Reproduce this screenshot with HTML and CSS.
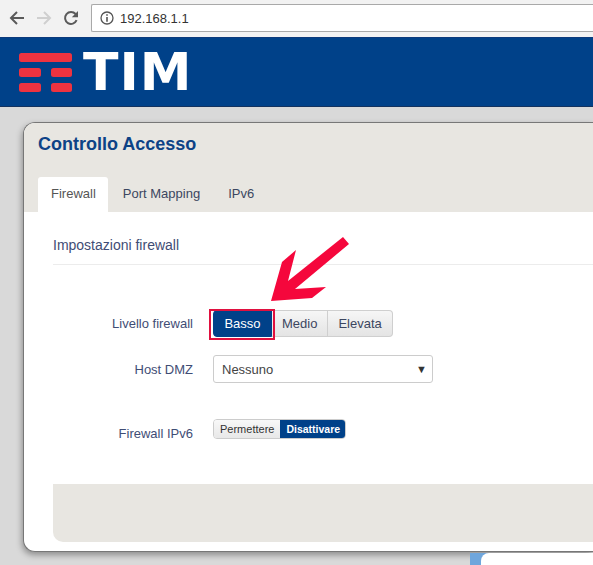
FILE: index.html
```html
<!DOCTYPE html>
<html lang="en">
<head>
    <meta charset="UTF-8">
    <meta name="viewport" content="width=device-width, initial-scale=1.0">
    <title>Controllo Accesso</title>
    <link rel="stylesheet" href="styles.css">
</head>
<body>
    <div class="browser-bar">
        <svg class="nav-icon" viewBox="0 0 16 16"><path d="M15 8H2.5M8 2L2 8l6 6" fill="none" stroke="#5a5a5a" stroke-width="2"/></svg>
        <svg class="nav-icon" viewBox="0 0 16 16"><path d="M1 8h12.5M8 2l6 6-6 6" fill="none" stroke="#cfcfcf" stroke-width="2"/></svg>
        <svg class="nav-icon" viewBox="0 0 16 16"><path d="M13.6 10.2A6 6 0 1 1 12.6 4" fill="none" stroke="#5a5a5a" stroke-width="2"/><path d="M15 1v6.2H8.8z" fill="#5a5a5a"/></svg>
        <div class="url-box">
            <svg class="info-icon" viewBox="0 0 14 14"><circle cx="7" cy="7" r="6" fill="none" stroke="#555" stroke-width="1.3"/><path d="M6.2 3.2h1.6v1.6H6.2zM6.2 6h1.6v4.8H6.2z" fill="#555"/></svg>
            <span>192.168.1.1</span>
        </div>
    </div>

    <header class="site-header">
        <svg class="logo-mark" viewBox="0 0 53 39">
            <rect x="0" y="0" width="53" height="9" rx="2.5"/>
            <rect x="0" y="15" width="22" height="9" rx="2.5"/>
            <rect x="32" y="15" width="21" height="9" rx="2.5"/>
            <rect x="0" y="30" width="22" height="9" rx="2.5"/>
            <rect x="32" y="30" width="21" height="9" rx="2.5"/>
        </svg>
        <span class="logo-text">TIM</span>
    </header>

    <main class="card">
        <div class="card-head">
            <h1>Controllo Accesso</h1>
            <ul class="tabs">
                <li class="tab active">Firewall</li>
                <li class="tab">Port Mapping</li>
                <li class="tab">IPv6</li>
            </ul>
        </div>
        <div class="card-body">
            <h2>Impostazioni firewall</h2>
            <div class="form-rows">
                <div class="row row-level">
                    <label>Livello firewall</label>
                    <div class="btn-group">
                        <button class="btn selected">Basso</button>
                        <button class="btn">Medio</button>
                        <button class="btn">Elevata</button>
                    </div>
                </div>
                <div class="row row-dmz">
                    <label>Host DMZ</label>
                    <div class="select-box">
                        <span>Nessuno</span>
                        <span class="caret">▼</span>
                    </div>
                </div>
                <div class="row row-ipv6">
                    <label>Firewall IPv6</label>
                    <div class="toggle">
                        <span class="toggle-item">Permettere</span>
                        <span class="toggle-item on">Disattivare</span>
                    </div>
                </div>
            </div>
            <div class="card-foot"></div>
        </div>
    </main>

    <div class="next-panel"><div class="next-panel-inner"></div></div>

    <!-- red annotation drawn over the screenshot -->
    <div class="mark-box"></div>
    <svg class="mark-arrow" viewBox="0 0 593 565"><polygon points="271,301 282,262 296,250 288,281 343,237 349,244 295,289 326,287 312,298" fill="#f5073c"/></svg>
</body>
</html>
```

FILE: styles.css
```css
html, body { height: 100%; }
body {
    margin: 0;
    font-family: 'Liberation Sans', Arial, sans-serif;
    background-color: #d9d9d9;
    color: #3d4a6b;
    overflow: hidden;
    position: relative;
}

/* browser chrome */
.browser-bar {
    height: 37px;
    box-sizing: border-box;
    padding: 4px 0 5px 9px;
    display: flex;
    align-items: center;
    gap: 11px;
    background-color: #f2f2f2;
}
.nav-icon { width: 16px; height: 16px; flex: none; }
.url-box {
    flex: 1;
    height: 28px;
    margin-left: 1px;
    box-sizing: border-box;
    display: flex;
    align-items: center;
    gap: 6px;
    padding-left: 8px;
    background-color: #fff;
    border: 1px solid #a9a9a9;
    border-right: none;
    border-radius: 2px 0 0 2px;
    font-size: 13px;
    color: #333;
}
.info-icon { width: 14px; height: 14px; }

/* site header */
.site-header {
    height: 70px;
    box-sizing: border-box;
    padding: 15px 0 0 19px;
    display: flex;
    align-items: flex-start;
    gap: 11px;
    background-color: #004189;
    border-top: 1px solid #0c3a7c;
    border-bottom: 1px solid #12325f;
}
.logo-mark { width: 53px; height: 39px; fill: #ee3340; flex: none; }
.logo-text {
    font-family: 'DejaVu Sans', sans-serif;
    font-weight: bold;
    font-size: 52px;
    line-height: 39px;
    letter-spacing: 1px;
    color: #fff;
}

/* main card, its right edge is cut off by the window */
.card {
    height: 430px;
    margin: 15px 0 0 23px;
    box-sizing: border-box;
    display: flex;
    flex-direction: column;
    background-color: #fff;
    border: 1px solid #777;
    border-right: none;
    border-radius: 12px 0 0 12px;
    box-shadow: -1px 3px 6px rgba(0,0,0,0.35);
    overflow: hidden;
}
.card-head {
    height: 89px;
    flex: none;
    box-sizing: border-box;
    padding: 10px 0 0 14px;
    background-color: #e8e6e1;
}
h1 {
    margin: 0;
    font-size: 18px;
    line-height: 22px;
    font-weight: bold;
    color: #0d4286;
}
.tabs {
    display: flex;
    list-style: none;
    margin: 22px 0 0;
    padding: 0;
}
.tab {
    height: 35px;
    box-sizing: border-box;
    padding: 9px 14px 0;
    font-size: 13px;
    line-height: 16px;
    color: #3c4660;
    border-radius: 3px 3px 0 0;
}
.tab.active {
    background-color: #fff;
    color: #555;
    padding: 9px 12px 0 13px;
    margin-right: 1px;
}

.card-body {
    flex: 1;
    display: flex;
    flex-direction: column;
    padding: 0 0 9px 29px;
}
h2 {
    margin: 0;
    height: 53px;
    box-sizing: border-box;
    padding-top: 25px;
    font-size: 14px;
    line-height: 16px;
    font-weight: normal;
    color: #3f4d75;
    border-bottom: 1px solid #ececec;
}
.form-rows { flex: 1; padding-top: 45px; }
.row { display: flex; align-items: center; }
.row label {
    width: 140px;
    margin-right: 20px;
    text-align: right;
    font-size: 13px;
    color: #3f4d75;
}
.row-dmz { margin-top: 18px; }
.row-ipv6 { margin-top: 34px; }
.row-ipv6 label { padding-top: 9px; }

/* level buttons */
.btn-group { display: flex; }
.btn {
    height: 27px;
    padding: 0 10px;
    font-family: inherit;
    font-size: 13px;
    color: #3c4660;
    background: linear-gradient(#f6f6f6, #e4e4e4);
    border: 1px solid #cfcfcf;
    border-left: none;
}
.btn:last-child { border-radius: 0 4px 4px 0; }
.btn.selected {
    width: 59px;
    padding: 0;
    font-weight: normal;
    color: #fff;
    background: #004189;
    border: 1px solid #004189;
    border-radius: 4px 0 0 4px;
}

.select-box {
    width: 220px;
    height: 28px;
    box-sizing: border-box;
    padding: 0 5px 0 8px;
    display: flex;
    align-items: center;
    justify-content: space-between;
    font-size: 13px;
    color: #444;
    background-color: #fff;
    border: 1px solid #ccc;
    border-radius: 3px;
}
.caret { font-size: 11px; color: #333; }

/* ipv6 toggle */
.toggle {
    display: flex;
    height: 20px;
    font-size: 11px;
    line-height: 18px;
    border: 1px solid #ccc;
    border-radius: 4px;
    box-sizing: border-box;
    overflow: hidden;
}
.toggle-item {
    padding: 0 6px;
    color: #333;
    background: linear-gradient(#f8f8f8, #e8e8e8);
}
.toggle-item.on {
    padding: 0 5px 0 6px;
    font-size: 10.5px;
    font-weight: bold;
    color: #fff;
    background: #004189;
}

.card-foot {
    height: 58px;
    flex: none;
    background-color: #e8e6e1;
    border-radius: 0 0 0 10px;
}

/* next panel peeking under the card */
.next-panel {
    margin: 0 0 0 470px;
    height: 13px;
    padding-left: 11px;
    background-color: #6fa6dc;
}
.next-panel-inner {
    height: 100%;
    margin-top: 1px;
    background-color: #fff;
    border-radius: 8px 0 0 0;
}

/* annotation */
.mark-box {
    position: absolute;
    left: 209px;
    top: 309px;
    width: 66px;
    height: 31px;
    box-sizing: border-box;
    border: 2px solid #e0103f;
}
.mark-arrow {
    position: absolute;
    left: 0;
    top: 0;
    width: 593px;
    height: 565px;
    pointer-events: none;
}
```
